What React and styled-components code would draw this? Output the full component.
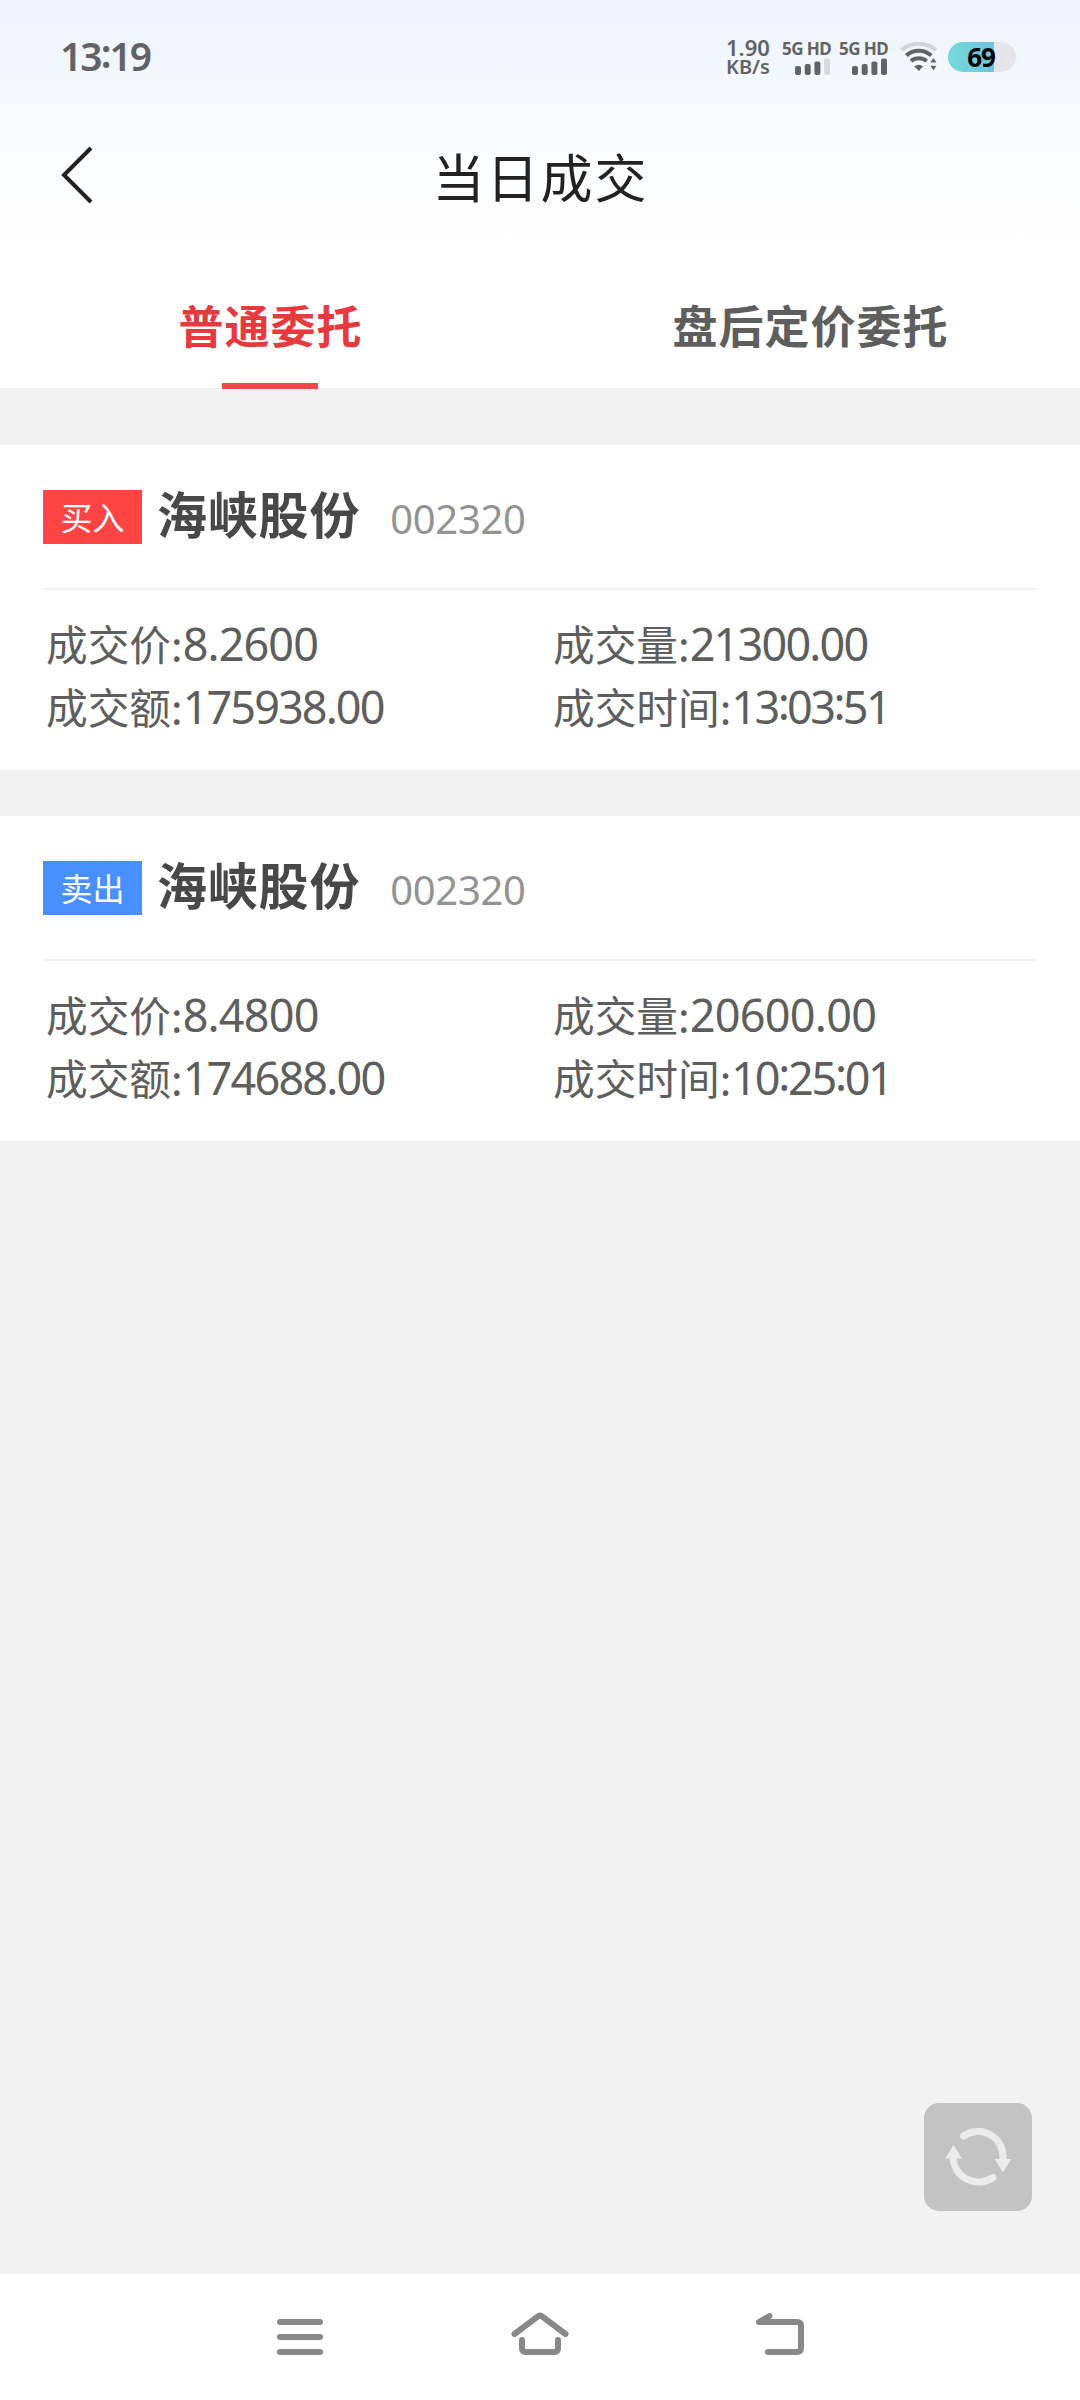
import React from 'react'
import styled, { createGlobalStyle } from 'styled-components'

const deals = [
    {
        side: 'buy',
        sideText: '买入',
        name: '海峡股份',
        code: '002320',
        fields: [
            { label: '成交价:', value: '8.2600', spacing: -0.9 },
            { label: '成交量:', value: '21300.00', spacing: -1.8 },
            { label: '成交额:', value: '175938.00', spacing: -1.9 },
            { label: '成交时间:', value: '13:03:51', spacing: -2.6 },
        ],
    },
    {
        side: 'sell',
        sideText: '卖出',
        name: '海峡股份',
        code: '002320',
        fields: [
            { label: '成交价:', value: '8.4800', spacing: -0.8 },
            { label: '成交量:', value: '20600.00', spacing: -0.7 },
            { label: '成交额:', value: '174688.00', spacing: -1.8 },
            { label: '成交时间:', value: '10:25:01', spacing: -2.3 },
        ],
    },
]

function Signal({ weak }) {
    return (
        <SignalStyled>
            <p>5G HD</p>
            <svg width="36" height="17" viewBox="0 0 36 17" fill="#626366">
                <rect x="0" y="8" width="6" height="9" rx="2" />
                <rect x="9.7" y="6" width="6" height="11" rx="2" />
                <rect x="19.4" y="3.5" width="6" height="13.5" rx="2" />
                <rect x="29" y="0.5" width="6" height="16.5" rx="2" fill={weak ? '#d6d8dc' : '#626366'} />
            </svg>
        </SignalStyled>
    )
}

function Wifi() {
    return (
        <svg width="38" height="30" viewBox="0 0 38 30" fill="none" strokeWidth="4">
            <path d="M1.5 8.3C11.5 -0.6 26 -0.6 36 8.3" stroke="#d3d5da" />
            <path d="M6.2 13.6C13.5 7.2 24 7.2 31.3 13.6" stroke="#626366" />
            <path d="M11 19C15.5 15.2 22 15.2 26.6 19" stroke="#626366" />
            <path d="M14.2 24.2Q18.8 21.2 23.2 24.2L18.8 29Z" fill="#626366" />
            <path d="M30.3 20.6L33.4 16L36.5 20.6ZM30.3 23.8L33.4 28.6L36.5 23.8Z" fill="#626366" />
        </svg>
    )
}

function StatusBar() {
    return (
        <StatusBarStyled>
            <Clock>13<Colon>:</Colon>19</Clock>
            <div className="status-right">
                <Speed>
                    <p className="rate">1.90</p>
                    <p className="unit">KB/s</p>
                </Speed>
                <Signal weak />
                <Signal />
                <Wifi />
                <Battery>69</Battery>
            </div>
        </StatusBarStyled>
    )
}

function Deal({ deal }) {
    return (
        <DealStyled>
            <DealTitle>
                <Side $side={deal.side}>{deal.sideText}</Side>
                <h4>{deal.name}</h4>
                <Code>{deal.code}</Code>
            </DealTitle>
            <Fields>
                {deal.fields.map((field) => (
                    <Field key={field.label}>
                        {field.label}
                        <Value $spacing={field.spacing}>
                            {field.value.split(':').map((part, i) => (
                                <React.Fragment key={i}>
                                    {i > 0 && <Colon>:</Colon>}
                                    {part}
                                </React.Fragment>
                            ))}
                        </Value>
                    </Field>
                ))}
            </Fields>
        </DealStyled>
    )
}

function App() {
    return (
        <Screen>
            <GlobalStyle />
            <Header>
                <StatusBar />
                <TitleBar>
                    <svg width="34" height="60" viewBox="0 0 34 60" fill="none" stroke="#222" strokeWidth="4">
                        <path d="M31 3L4 30L31 57" />
                    </svg>
                    <h1>当日成交</h1>
                </TitleBar>
                <Tabs>
                    <Tab $active>普通委托</Tab>
                    <Tab>盘后定价委托</Tab>
                </Tabs>
            </Header>
            <List>
                {deals.map((deal) => (
                    <Deal key={deal.side} deal={deal} />
                ))}
            </List>
            <Refresh>
                <svg width="72" height="64" viewBox="0 0 72 64" fill="none" stroke="#ebebeb" strokeWidth="7" strokeLinecap="round">
                    <path d="M21.5 10A25 25 0 0 1 61 31V35" strokeLinecap="butt" />
                    <path d="M21.5 10L22.5 9.4M51 51.5L50 52.2" />
                    <path d="M51 51.5A25.5 25.5 0 0 1 11 31V27" strokeLinecap="butt" />
                    <path d="M52.5 33H69.5L61 46.5ZM3 32.5H20L11.5 19Z" fill="#ebebeb" stroke="none" />
                </svg>
            </Refresh>
            <NavBar>
                <svg viewBox="0 0 60 60">
                    <path d="M10 15H50M10 30H50M10 45H50" />
                </svg>
                <svg viewBox="0 0 60 60">
                    <path d="M4.5 27L28 9.3Q30 7.8 32 9.3L55.5 27" />
                    <path d="M12 33V41Q12 45 16 45H44Q48 45 48 41V33" />
                </svg>
                <svg viewBox="0 0 60 60">
                    <path d="M19.5 9L9 15H47Q51 15 51 19V41Q51 45 47 45H18" />
                </svg>
            </NavBar>
        </Screen>
    )
}

const GlobalStyle = createGlobalStyle`
body{
    margin: 0;
    font-family: "Noto Sans CJK SC", sans-serif;
    background: #f2f2f2;
}
h1, h4, p{
    margin: 0;
}
svg{
    display: block;
    flex-shrink: 0;
}
`

const Screen = styled.div`
position: relative;
display: flex;
flex-direction: column;
width: 1080px;
height: 2400px;
overflow: hidden;
background: #f2f2f2;
`

const Header = styled.header`
background: linear-gradient(#edf4fe 0, #f5f8fe 90px, #fafcff 150px, #fff 240px);
`

const StatusBarStyled = styled.div`
display: flex;
justify-content: space-between;
height: 114px;
box-sizing: border-box;
padding: 0 64px 0 60px;
align-items: center;
color: #626366;
.status-right{
    display: flex;
    align-items: center;
}
`

const Colon = styled.span`
line-height: 0;
vertical-align: 0.09em;
`

const Clock = styled.div`
font-family: "Noto Sans", sans-serif;
font-size: 39px;
font-weight: 600;
line-height: 60px;
letter-spacing: -2px;
margin-bottom: 3px;
`

const Speed = styled.div`
width: 57px;
font-family: "Noto Sans", sans-serif;
font-weight: 600;
white-space: nowrap;
.rate{
    font-size: 22px;
    line-height: 20px;
    letter-spacing: 0;
}
.unit{
    font-size: 20px;
    line-height: 20px;
    letter-spacing: 0;
}
`

const SignalStyled = styled.div`
display: flex;
flex-direction: column;
align-items: flex-end;
width: 48px;
margin-right: 9px;
padding-top: 1px;
&:nth-child(3){
    margin-right: 12px;
}
p{
    font-family: "Noto Sans", sans-serif;
    font-size: 17px;
    font-weight: 700;
    line-height: 15px;
    margin-bottom: 2px;
    letter-spacing: -0.6px;
    white-space: nowrap;
}
`

const Battery = styled.div`
display: flex;
align-items: center;
justify-content: center;
width: 68px;
height: 30px;
margin-left: 10px;
padding-right: 2px;
box-sizing: border-box;
border-radius: 15px;
background: linear-gradient(90deg, #75dadb 0, #6dc3dd 46px, #e3e5e8 46px);
color: #000;
font-family: "Noto Sans", sans-serif;
font-size: 26px;
font-weight: 700;
line-height: 30px;
letter-spacing: -1px;
`

const TitleBar = styled.div`
display: grid;
grid-template-columns: 160px 1fr 160px;
align-items: center;
height: 129px;
svg{
    margin: 0 0 7px 60px;
}
h1{
    margin-bottom: 6px;
    font-size: 52px;
    font-weight: 400;
    line-height: 76px;
    letter-spacing: 2px;
    text-indent: 1px;
    text-align: center;
    color: #222;
}
`

const Tabs = styled.nav`
display: flex;
height: 145px;
`

const Tab = styled.div`
position: relative;
flex: 1;
text-align: center;
font-size: 45px;
font-weight: 700;
line-height: 163px;
letter-spacing: 1px;
text-indent: 1px;
color: ${(props) => (props.$active ? '#e8393e' : '#5e5e5e')};
&::after{
    content: "";
    display: ${(props) => (props.$active ? 'block' : 'none')};
    position: absolute;
    left: 222px;
    bottom: -1px;
    width: 96px;
    height: 6px;
    background: #f04848;
}
`

const List = styled.main`
flex: 1;
display: flex;
flex-direction: column;
gap: 46px;
padding-top: 57px;
`

const DealStyled = styled.section`
height: 325px;
box-sizing: border-box;
padding: 0 43px;
background: #fff;
`

const DealTitle = styled.div`
display: flex;
align-items: center;
height: 145px;
box-sizing: border-box;
border-bottom: 2px solid #f0f0f0;
h4{
    font-size: 50px;
    line-height: 70px;
    letter-spacing: 0.8px;
    margin: 0 0 9px 15px;
    color: #484848;
}
`

const Side = styled.span`
width: 99px;
height: 54px;
line-height: 53px;
text-align: center;
font-size: 32px;
color: #fff;
background: ${(props) => (props.$side === 'buy' ? '#ff4444' : '#488fff')};
`

const Code = styled.span`
margin: 5px 0 0 30px;
font-family: "Noto Sans", sans-serif;
font-size: 40px;
line-height: 54px;
letter-spacing: -0.3px;
color: #939393;
`

const Fields = styled.div`
display: grid;
grid-template-columns: 507px 1fr;
padding: 22px 0 0 3px;
`

const Field = styled.p`
height: 63px;
line-height: 63px;
font-size: 41.7px;
white-space: nowrap;
color: #5e5e5e;
`

const Value = styled.span`
font-family: "Noto Sans", sans-serif;
font-size: 45px;
letter-spacing: ${(props) => props.$spacing}px;
`

const Refresh = styled.button`
position: absolute;
right: 48px;
bottom: 189px;
display: flex;
align-items: center;
justify-content: center;
width: 108px;
height: 108px;
padding: 2px 0 0;
border: 0;
border-radius: 15px;
background: #c3c3c3;
`

const NavBar = styled.footer`
display: flex;
align-items: center;
justify-content: center;
gap: 180px;
height: 126px;
background: #fff;
svg{
    width: 60px;
    height: 60px;
    fill: none;
    stroke: #888;
    stroke-width: 6;
    stroke-linecap: round;
    stroke-linejoin: round;
}
`

export default App
